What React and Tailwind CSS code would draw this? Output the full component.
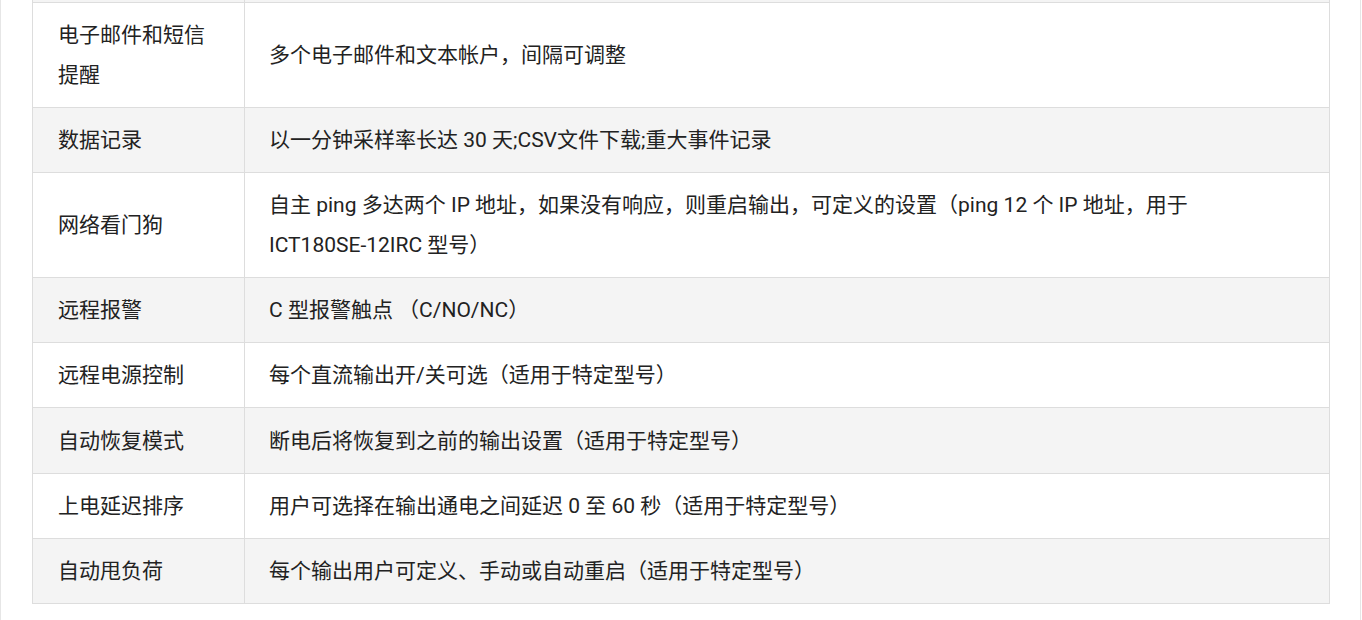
const rows = [
  ['电子邮件和短信提醒', '多个电子邮件和文本帐户，间隔可调整'],
  ['数据记录', '以一分钟采样率长达 30 天;CSV文件下载;重大事件记录'],
  [
    '网络看门狗',
    <>
      自主 ping 多达两个 IP 地址，如果没有响应，则重启输出，可定义的设置（ping 12 个 IP 地址，用于{' '}
      <span className="whitespace-nowrap">ICT180SE-12IRC</span> 型号）
    </>,
  ],
  ['远程报警', 'C 型报警触点 （C/NO/NC）'],
  ['远程电源控制', '每个直流输出开/关可选（适用于特定型号）'],
  ['自动恢复模式', '断电后将恢复到之前的输出设置（适用于特定型号）'],
  ['上电延迟排序', '用户可选择在输出通电之间延迟 0 至 60 秒（适用于特定型号）'],
  ['自动甩负荷', '每个输出用户可定义、手动或自动重启（适用于特定型号）'],
];

export default function App() {
  return (
    <div
      className="w-[1362px] h-[620px] bg-white overflow-hidden"
      style={{ fontFamily: 'Roboto, "Noto Sans CJK SC", sans-serif' }}
    >
      <div className="h-full w-[1361px] border-x border-[#e6e6e6] pl-[31px]">
        <table className="w-[1298px] border-collapse text-[21px] leading-[39.67px] text-[#222]">
          <tbody>
            <tr className="h-[2px] bg-[#f4f4f4]">
              <td className="w-[212px] p-0 border-x border-b border-[#dddddd]"></td>
              <td className="p-0 border-x border-b border-[#dddddd]"></td>
            </tr>
            {rows.map(([name, desc], i) => (
              <tr key={i} className={i % 2 === 0 ? 'bg-white' : 'bg-[#f4f4f4]'}>
                <td className="w-[212px] border border-[#dddddd] px-[25px] pt-[13.33px] pb-[11.33px] align-middle">{name}</td>
                <td className="border border-[#dddddd] pl-[24px] pr-[25px] pt-[13.33px] pb-[11.33px] align-middle">{desc}</td>
              </tr>
            ))}
          </tbody>
        </table>
      </div>
    </div>
  );
}
